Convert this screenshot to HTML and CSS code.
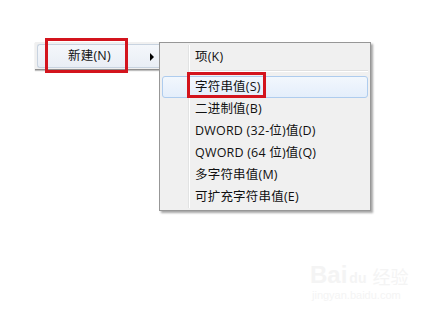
FILE: index.html
```html
<!DOCTYPE html>
<html>
<head>
<meta charset="utf-8">
<link rel="stylesheet" href="styles.css">
</head>
<body>
<div class="stage">
  <div class="parent-menu">
    <div class="parent-item">
      <span class="parent-label">新建(N)</span>
      <span class="arrow"></span>
    </div>
  </div>
  <div class="submenu">
    <div class="gutter"></div>
    <div class="item">项(K)</div>
    <div class="sep"></div>
    <div class="item hot">字符串值(S)</div>
    <div class="item">二进制值(B)</div>
    <div class="item">DWORD (32-位)值(D)</div>
    <div class="item">QWORD (64 位)值(Q)</div>
    <div class="item">多字符串值(M)</div>
    <div class="item">可扩充字符串值(E)</div>
  </div>
  <div class="mark mark-new"></div>
  <div class="mark mark-str"></div>
  <div class="watermark">
    <div class="wm-top"><span class="wm-bai">Bai</span><span class="wm-du">du</span><span class="wm-jy">经验</span></div>
    <div class="wm-url">jingyan.baidu.com</div>
  </div>
</div>
</body>
</html>
```
FILE: styles.css
```css
html, body {
  margin: 0;
  padding: 0;
  background: #ffffff;
}
body {
  font-family: "Open Sans", "Noto Sans CJK SC", sans-serif;
  font-size: 12.5px;
  letter-spacing: 0.2px;
  color: #111;
}
.stage {
  position: relative;
  width: 428px;
  height: 318px;
  overflow: hidden;
}
.parent-menu {
  position: absolute;
  left: 35px;
  top: 42px;
  width: 125px;
  height: 28px;
  background: #f0f0f0;
  border-bottom: 1px solid #8e8e8e;
  box-shadow: 0 1px 1px rgba(0,0,0,0.25);
  box-sizing: border-box;
  padding: 2px 0 0 2px;
}
.parent-item {
  height: 24px;
  width: 126px;
  box-sizing: border-box;
  border: 1px solid #c8d3e0;
  border-right: none;
  border-radius: 3px 0 0 3px;
  background: linear-gradient(#f4f7fb, #e9eef5);
  display: flex;
  align-items: center;
  position: relative;
}
.parent-label {
  margin-left: 30px;
  line-height: 22px;
}
.arrow {
  position: absolute;
  left: 112px;
  top: 8px;
  width: 0;
  height: 0;
  border-top: 4px solid transparent;
  border-bottom: 4px solid transparent;
  border-left: 4px solid #000;
}
.submenu {
  position: absolute;
  left: 159px;
  top: 42px;
  width: 212px;
  height: 169px;
  box-sizing: border-box;
  background: #f0f0f0;
  border: 1px solid #979797;
  box-shadow: 2px 2px 2px rgba(0,0,0,0.35);
  padding: 3px 2px 1px;
  display: flex;
  flex-direction: column;
}
.gutter {
  position: absolute;
  left: 28px;
  top: 2px;
  bottom: 2px;
  width: 1px;
  background: #e2e3e3;
  border-right: 1px solid #ffffff;
}
.item {
  position: relative;
  height: 22px;
  line-height: 22px;
  padding-left: 33px;
  box-sizing: border-box;
  white-space: nowrap;
  flex: none;
}
.item.hot {
  border: 1px solid #aeccee;
  border-radius: 3px;
  background: linear-gradient(#f2f7fd, #e4eefb);
  line-height: 20px;
  padding-left: 32px;
}
.sep {
  height: 8px;
  margin-left: 29px;
  position: relative;
  flex: none;
}
.sep::before {
  content: "";
  position: absolute;
  left: 0;
  right: 0;
  top: 2px;
  height: 1px;
  background: #e0e0e0;
  border-bottom: 1px solid #ffffff;
}
.mark {
  position: absolute;
  border: 3px solid #d3141d;
  box-sizing: border-box;
}
.mark-new {
  left: 45px;
  top: 38px;
  width: 83px;
  height: 35px;
}
.mark-str {
  left: 187px;
  top: 72px;
  width: 79px;
  height: 26px;
}
.watermark {
  position: absolute;
  left: 310px;
  top: 262px;
  color: #f4f4f4;
  letter-spacing: 0;
  font-family: "Liberation Sans", sans-serif;
}
.wm-top {
  display: flex;
  align-items: flex-end;
  gap: 2px;
}
.wm-bai {
  font-size: 24px;
  font-weight: bold;
  line-height: 26px;
}
.wm-du {
  font-size: 14px;
  font-weight: bold;
  line-height: 20px;
}
.wm-jy {
  font-family: "Noto Sans CJK SC", sans-serif;
  font-size: 18px;
  line-height: 24px;
  margin-left: 4px;
}
.wm-url {
  font-size: 11px;
  line-height: 14px;
  margin-left: 2px;
}
```
